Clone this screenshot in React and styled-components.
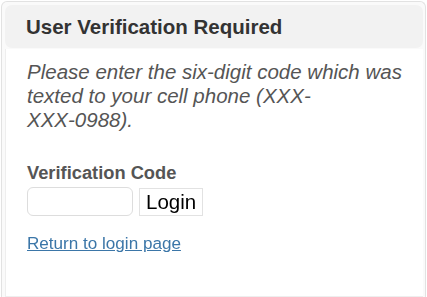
import React from 'react'
import styled, { createGlobalStyle } from 'styled-components'

const GlobalStyle = createGlobalStyle`
  html, body {
    margin: 0;
    padding: 0;
    background: #fff;
  }
  body {
    font-family: "Liberation Sans", Arial, sans-serif;
  }
`

const Dialog = styled.div`
  box-sizing: border-box;
  width: 425px;
  height: 296px;
  margin: 1px 0 0 1px;
  padding: 3px 2px 0 3px;
  border: 1px solid #e2e2e2;
  border-bottom: none;
  border-radius: 6px 6px 0 0;
  background: #fafafa;
  display: flex;
  flex-direction: column;
`

const Header = styled.div`
  flex: 0 0 43px;
  display: flex;
  align-items: center;
  padding: 0 0 0 21px;
  border-radius: 7px;
  background: #f2f2f2;
`

const Title = styled.h1`
  margin: 0;
  font-size: 20.5px;
  font-weight: bold;
  color: #333;
`

const Body = styled.div`
  flex: 1;
  margin-top: 1px;
  padding: 11px 18px 0 21px;
  background: #fff;
  border-left: 1px solid #eee;
  border-bottom: 1px solid #eee;
`

const Message = styled.p`
  margin: 0;
  font-size: 20.5px;
  line-height: 24px;
  font-style: italic;
  color: #555;
`

const NoWrap = styled.span`
  white-space: nowrap;
`

const Label = styled.label`
  display: block;
  margin-top: 30px;
  font-size: 18.3px;
  font-weight: bold;
  color: #555;
`

const Row = styled.div`
  display: flex;
  gap: 6px;
  margin-top: 3px;
`

const Input = styled.input`
  box-sizing: border-box;
  width: 106px;
  height: 29px;
  padding: 0 4px;
  border: 1px solid #ddd;
  border-radius: 6px;
  outline: none;
  font-size: 20px;
  caret-color: #000;
`

const Button = styled.button`
  box-sizing: border-box;
  height: 28px;
  margin-top: 1px;
  padding: 0 6px;
  border: 1px solid #e2e2e2;
  border-radius: 0;
  background: #fff;
  color: #000;
  font-family: "Liberation Sans", Arial, sans-serif;
  font-size: 20.5px;
`

const Link = styled.a`
  display: inline-block;
  margin-top: 18px;
  font-size: 17.1px;
  color: #3b76a8;
  text-decoration: underline;
`

export default function App() {
  return (
    <>
      <GlobalStyle />
      <Dialog>
        <Header>
          <Title>User Verification Required</Title>
        </Header>
        <Body>
          <Message>
            Please enter the six-digit code which was texted to your cell phone (XXX-<NoWrap>XXX-0988).</NoWrap>
          </Message>
          <Label htmlFor="code">Verification Code</Label>
          <Row>
            <Input id="code" autoFocus />
            <Button>Login</Button>
          </Row>
          <Link href="#">Return to login page</Link>
        </Body>
      </Dialog>
    </>
  )
}
